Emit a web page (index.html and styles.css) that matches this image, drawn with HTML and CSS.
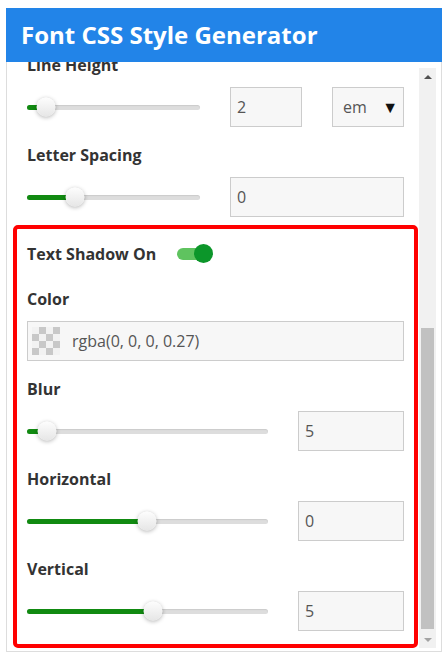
FILE: index.html
```html
<!DOCTYPE html>
<html lang="en">
<head>
    <meta charset="UTF-8">
    <meta name="viewport" content="width=device-width, initial-scale=1.0">
    <title>Font CSS Style Generator</title>
    <link rel="stylesheet" href="styles.css">
</head>
<body>
    <div class="panel">
        <div class="header">Font CSS Style Generator</div>
        <div class="body">
            <div class="content">
                <div class="inner">
                    <!-- LINE HEIGHT -->
                    <div class="field">
                        <div class="label">Line Height</div>
                        <div class="row">
                            <div class="slider short">
                                <div class="fill" style="width: 11%"></div>
                                <div class="thumb" style="left: 11%"></div>
                            </div>
                            <input type="text" class="box small" value="2">
                            <div class="box small select">em <span class="caret">&#9660;</span></div>
                        </div>
                    </div>

                    <!-- LETTER SPACING -->
                    <div class="field">
                        <div class="label">Letter Spacing</div>
                        <div class="row">
                            <div class="slider short">
                                <div class="fill" style="width: 27.7%"></div>
                                <div class="thumb" style="left: 27.7%"></div>
                            </div>
                            <input type="text" class="box" value="0">
                        </div>
                    </div>

                    <!-- TEXT SHADOW -->
                    <div class="shadow-box">
                        <div class="toggle-row">
                            <div class="label">Text Shadow On</div>
                            <div class="toggle">
                                <div class="toggle-track"></div>
                                <div class="toggle-knob"></div>
                            </div>
                        </div>

                        <div class="field">
                            <div class="label">Color</div>
                            <div class="box color-box">
                                <div class="swatch"></div>
                                <span>rgba(0, 0, 0, 0.27)</span>
                            </div>
                        </div>

                        <div class="field">
                            <div class="label">Blur</div>
                            <div class="row">
                                <div class="slider long">
                                    <div class="fill" style="width: 8.3%"></div>
                                    <div class="thumb" style="left: 8.3%"></div>
                                </div>
                                <input type="text" class="box" value="5">
                            </div>
                        </div>

                        <div class="field">
                            <div class="label">Horizontal</div>
                            <div class="row">
                                <div class="slider long">
                                    <div class="fill" style="width: 49.8%"></div>
                                    <div class="thumb" style="left: 49.8%"></div>
                                </div>
                                <input type="text" class="box" value="0">
                            </div>
                        </div>

                        <div class="field last">
                            <div class="label">Vertical</div>
                            <div class="row">
                                <div class="slider long">
                                    <div class="fill" style="width: 52.3%"></div>
                                    <div class="thumb" style="left: 52.3%"></div>
                                </div>
                                <input type="text" class="box" value="5">
                            </div>
                        </div>
                    </div>
                </div>
            </div>

            <div class="scrollbar">
                <div class="sb-btn"><span class="arrow-up"></span></div>
                <div class="sb-space"></div>
                <div class="sb-thumb"></div>
                <div class="sb-btn down"><span class="arrow-down"></span></div>
            </div>
        </div>
    </div>
</body>
</html>
```

FILE: styles.css
```css
body {
    margin: 0;
    background-color: #fff;
    font-family: "Open Sans", "Liberation Sans", sans-serif;
}
.panel {
    margin: 8px 6px;
    width: 436px;
}
.header {
    height: 54px;
    line-height: 54px;
    background-color: #2284e8;
    color: #fff;
    font-size: 24px;
    font-weight: bold;
    padding-left: 15px;
}
.body {
    display: flex;
    height: 590px;
    box-sizing: border-box;
    border: 1px solid #ddd;
    border-top: none;
}
.content {
    flex: 1;
    min-width: 0;
    overflow: hidden;
    padding: 0 15px 0 20px;
}
.inner {
    margin-top: -9px;
}
.field {
    margin-bottom: 16px;
}
.field.last {
    margin-bottom: 0;
}
.label {
    height: 24px;
    line-height: 24px;
    font-size: 16px;
    font-weight: bold;
    color: #333;
    margin-bottom: 10px;
}
.row {
    display: flex;
    align-items: center;
    gap: 30px;
    height: 40px;
}
.slider {
    position: relative;
    height: 5px;
    background-color: #ddd;
    border-radius: 3px;
    box-shadow: inset 0 1px 1px rgba(0,0,0,0.08);
}
.slider.short {
    flex: 0 0 173px;
}
.slider.long {
    flex: 0 0 241px;
}
.fill {
    height: 100%;
    background-color: #118a11;
    border-radius: 3px;
}
.thumb {
    position: absolute;
    top: 50%;
    width: 19px;
    height: 19px;
    border-radius: 50%;
    background: linear-gradient(#fdfdfd, #e6e6e6);
    box-shadow: 0 1px 4px rgba(0,0,0,0.3);
    transform: translate(-50%, -50%);
}
.box {
    flex: 1;
    width: 0;
    min-width: 0;
    height: 40px;
    box-sizing: border-box;
    border: 1px solid #ccc;
    background-color: #f7f7f7;
    color: #555;
    font-family: "Open Sans", "Liberation Sans", sans-serif;
    font-size: 16px;
    padding: 0 6px;
    margin: 0;
    outline: none;
}
.box.small {
    flex: 0 0 72px;
}
.select {
    display: flex;
    align-items: center;
    justify-content: space-between;
    padding: 0 5px 0 10px;
}
.caret {
    color: #111;
    font-size: 16px;
}
.shadow-box {
    margin: -8px -14px 0;
    border: 4px solid #f00;
    border-radius: 5px;
    padding: 13px 10px;
}
.toggle-row {
    display: flex;
    align-items: center;
    margin-bottom: 21px;
}
.toggle-row .label {
    margin-bottom: 0;
}
.toggle {
    position: relative;
    width: 36px;
    height: 20px;
    margin-left: 21px;
}
.toggle-track {
    position: absolute;
    left: 0;
    top: 4px;
    width: 30px;
    height: 12px;
    border-radius: 6px;
    background-color: #5fc35f;
}
.toggle-knob {
    position: absolute;
    right: 0;
    top: 0;
    width: 19px;
    height: 19px;
    border-radius: 50%;
    background-color: #0c962a;
}
.color-box {
    flex: none;
    width: auto;
    display: flex;
    align-items: center;
    padding-left: 4px;
}
.swatch {
    width: 28px;
    height: 28px;
    margin-right: 12px;
    background-color: #f2f2f2;
    background-image:
        linear-gradient(45deg, #c8c8c8 25%, transparent 25%, transparent 75%, #c8c8c8 75%),
        linear-gradient(45deg, #c8c8c8 25%, transparent 25%, transparent 75%, #c8c8c8 75%);
    background-size: 14px 14px;
    background-position: 0 0, 7px 7px;
}
.scrollbar {
    display: flex;
    flex-direction: column;
    width: 17px;
    margin: 6px 5px 3px 0;
    background-color: #f1f1f1;
}
.sb-btn {
    height: 17px;
    display: flex;
    align-items: center;
    justify-content: center;
}
.sb-btn.down {
    margin-top: 2px;
}
.sb-space {
    flex: 1;
}
.sb-thumb {
    height: 301px;
    width: 13px;
    margin: 0 auto;
    background-color: #c1c1c1;
}
.arrow-up {
    border-left: 4px solid transparent;
    border-right: 4px solid transparent;
    border-bottom: 4px solid #505050;
}
.arrow-down {
    border-left: 4px solid transparent;
    border-right: 4px solid transparent;
    border-top: 4px solid #a3a3a3;
}
```
